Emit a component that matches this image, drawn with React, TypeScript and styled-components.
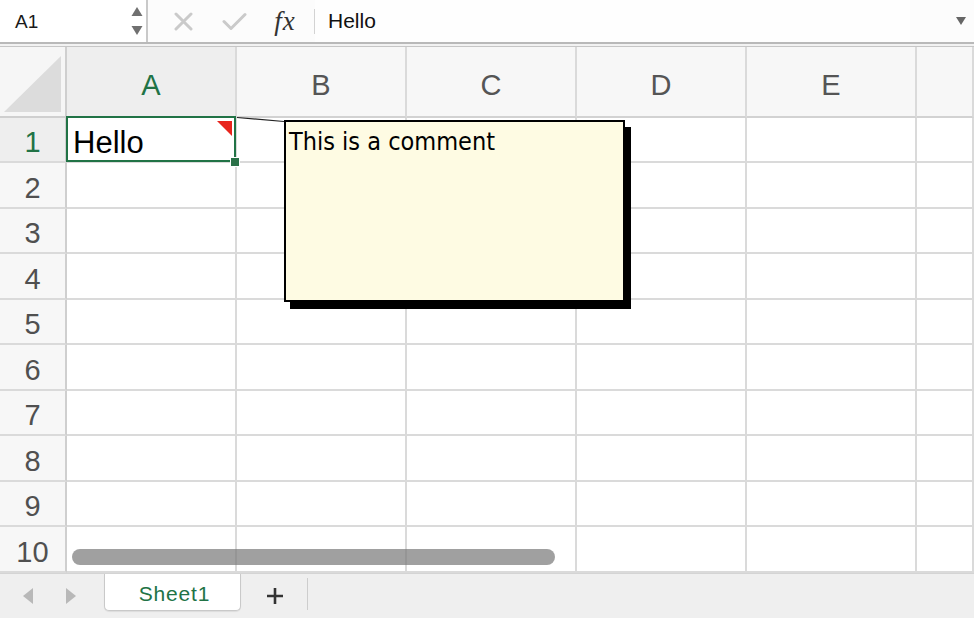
import React from "react";
import styled, { createGlobalStyle } from "styled-components";

const Global = createGlobalStyle`
  html, body { margin: 0; padding: 0; }
  body {
    width: 974px; height: 618px; overflow: hidden; background: #fff;
    font-family: "Liberation Sans", Arial, sans-serif;
  }
`;

const GREEN = "#217346";
const GRID = "#dadada";

const Window = styled.div`
  width: 974px; height: 618px; display: flex; flex-direction: column; overflow: hidden;
`;

const FormulaBar = styled.div`
  height: 42px; display: flex; align-items: center; background: #fcfcfc; flex: none;
`;

const NameBox = styled.div`
  width: 146px; height: 100%; display: flex; align-items: center; justify-content: space-between;
  padding: 0 3px 0 15px; box-sizing: border-box; background: #fff;
`;

const NameText = styled.span`
  font-size: 19px; color: #1a1a1a; padding-top: 1px;
`;

const VDivider = styled.div`
  width: 2px; align-self: stretch; background: #c9c9c9;
`;

const IconSlot = styled.div<{ $w: number }>`
  width: ${(p) => p.$w}px; display: flex; justify-content: center; align-items: center;
`;

const Fx = styled.span`
  font-family: "Liberation Serif", "Times New Roman", serif; font-style: italic;
  font-size: 27px; color: #333; letter-spacing: 1px; margin-left: 6px;
`;

const ThinDivider = styled.div`
  width: 1px; height: 25px; background: #d3d3d3;
`;

const FormulaInput = styled.div`
  flex: 1; height: 100%; display: flex; align-items: center; padding-left: 13px;
  font-size: 21px; color: #111; background: #fefefe; margin-right: 46px;
`;

const ExpandArrow = styled.div`
  width: 0; height: 0;
  border-left: 5px solid transparent; border-right: 5px solid transparent;
  border-top: 8px solid #666; margin-right: 8px;
`;

const BarSeparator = styled.div`
  height: 5px; flex: none; box-sizing: border-box;
  border-top: 2px solid #b9b9b9; border-bottom: 1px solid #c6c6c6; background: #f2f2f2;
`;

const SheetArea = styled.div`
  position: relative; height: 526px; flex: none; overflow: hidden;
`;

const Grid = styled.div`
  display: grid;
  grid-template-columns: 67px repeat(5, 170px) 1fr;
  grid-template-rows: 71px repeat(5, 45px 46px);
  height: 100%;
`;

const Cell = styled.div<{ $selected?: boolean }>`
  position: relative; box-sizing: border-box; background: #fff;
  z-index: ${(p) => (p.$selected ? 2 : "auto")};
  border-right: 2px solid ${GRID}; border-bottom: 2px solid ${GRID};
  display: flex; align-items: center; padding: 7px 0 0 6px;
  font-size: 31px; color: #000;
`;

const Corner = styled.div`
  position: relative; box-sizing: border-box; background: #f6f6f6;
  border-right: 2px solid #cfcfcf; border-bottom: 2px solid #cfcfcf;
  display: flex; align-items: flex-end; justify-content: flex-end; padding: 0 4px 4px 0;
`;

const CornerTri = styled.div`
  width: 0; height: 0;
  border-bottom: 56px solid #dcdcdc; border-left: 57px solid transparent;
`;

const ColHeader = styled.div<{ $active?: boolean }>`
  box-sizing: border-box; background: ${(p) => (p.$active ? "#eeeeee" : "#f7f7f7")};
  border-right: 2px solid ${GRID}; border-bottom: 2px solid #d2d2d2;
  display: flex; align-items: center; justify-content: center; padding-top: 7px;
  font-size: 29px; color: ${(p) => (p.$active ? GREEN : "#555")};
`;

const RowHeader = styled.div<{ $active?: boolean }>`
  box-sizing: border-box; background: ${(p) => (p.$active ? "#eeeeee" : "#f7f7f7")};
  border-right: 2px solid #cfcfcf; border-bottom: 2px solid ${GRID};
  display: flex; align-items: center; justify-content: center; padding-top: 6px;
  font-size: 29px; color: ${(p) => (p.$active ? GREEN : "#505050")};
`;

const Selection = styled.div`
  position: absolute; top: -2px; left: -1px; right: -1px; bottom: -1px;
  border: 2px solid ${GREEN}; pointer-events: none;
`;

const CommentMark = styled.div`
  position: absolute; top: 3px; right: 3px; width: 0; height: 0;
  border-top: 15px solid #e8251d; border-left: 15px solid transparent;
`;

const FillHandle = styled.div`
  position: absolute; right: -5px; bottom: -6px; width: 8px; height: 8px;
  background: #2b7148; border: 1px solid #fff;
`;

const Connector = styled.svg`
  position: absolute; left: 237px; top: 70px; overflow: visible; z-index: 3;
`;

const CommentBox = styled.div`
  position: absolute; left: 284px; top: 73px; width: 341px; height: 182px; z-index: 3;
  box-sizing: border-box; background: #fefbe3; border: 2px solid #000;
  box-shadow: 6px 7px 0 #000; padding: 5px 3px;
  font-family: "DejaVu Sans Condensed", "DejaVu Sans", sans-serif; font-stretch: condensed;
  font-size: 25px; color: #000; line-height: 29px;
`;

const HScrollbar = styled.div`
  position: absolute; left: 72px; top: 502px; width: 483px; height: 16px; z-index: 3;
  border-radius: 8px; background: rgba(120, 120, 120, 0.7);
`;

const SheetTabs = styled.div`
  flex: 1; display: flex; align-items: flex-start; background: #efefef;
  border-top: 1px solid #d4d4d4; box-sizing: border-box;
`;

const NavArrows = styled.div`
  width: 104px; height: 44px; display: flex; align-items: center; gap: 33px;
  padding-left: 23px; box-sizing: border-box;
`;

const NavArrow = styled.div<{ $dir: "left" | "right" }>`
  width: 0; height: 0;
  border-top: 8px solid transparent; border-bottom: 8px solid transparent;
  ${(p) => (p.$dir === "left" ? "border-right: 10px solid #b8b8b8;" : "border-left: 10px solid #b8b8b8;")}
`;

const Tab = styled.div`
  width: 137px; height: 37px; box-sizing: border-box; background: #fff;
  border: 1px solid #c9c9c9; border-top: none; border-radius: 0 0 5px 5px;
  display: flex; align-items: center; justify-content: center; padding: 3px 0 0 4px;
  font-size: 21px; letter-spacing: 0.8px; color: ${GREEN};
  box-shadow: 0 1px 1px rgba(0,0,0,0.08);
`;

const AddSheet = styled.div`
  width: 66px; height: 44px; display: flex; align-items: center; justify-content: center;
  padding-left: 2px; box-sizing: border-box;
`;

const TabDivider = styled.div`
  width: 1px; height: 32px; margin-top: 4px; background: #cdcdcd;
`;

const cols = ["A", "B", "C", "D", "E", ""];

export default function App() {
  const rows = Array.from({ length: 10 }, (_, i) => i + 1);
  return (
    <>
      <Global />
      <Window>
        <FormulaBar>
          <NameBox>
            <NameText>A1</NameText>
            <svg width="12" height="28" viewBox="0 0 12 28">
              <polygon points="6,0 11.5,9 0.5,9" fill="#707070" />
              <polygon points="0.5,19 11.5,19 6,28" fill="#707070" />
            </svg>
          </NameBox>
          <VDivider />
          <IconSlot $w={70}>
            <svg width="19" height="19" viewBox="0 0 19 19">
              <path d="M2 2 L17 17 M17 2 L2 17" stroke="#cacaca" strokeWidth="3" strokeLinecap="round" />
            </svg>
          </IconSlot>
          <IconSlot $w={32}>
            <svg width="25" height="19" viewBox="0 0 25 19">
              <path d="M2 9.5 L9 16.5 L23 2.5" stroke="#cacaca" strokeWidth="3" fill="none" strokeLinecap="round" strokeLinejoin="round" />
            </svg>
          </IconSlot>
          <IconSlot $w={64}>
            <Fx>fx</Fx>
          </IconSlot>
          <ThinDivider />
          <FormulaInput>Hello</FormulaInput>
          <ExpandArrow />
        </FormulaBar>
        <BarSeparator />
        <SheetArea>
          <Grid>
            <Corner>
              <CornerTri />
            </Corner>
            {cols.map((c, i) => (
              <ColHeader key={i} $active={c === "A"}>{c}</ColHeader>
            ))}
            {rows.map((r) => (
              <React.Fragment key={r}>
                <RowHeader $active={r === 1}>{r}</RowHeader>
                {cols.map((c, i) => {
                  const selected = r === 1 && c === "A";
                  return (
                    <Cell key={i} $selected={selected}>
                      {selected && (
                        <>
                          Hello
                          <CommentMark />
                          <Selection />
                          <FillHandle />
                        </>
                      )}
                    </Cell>
                  );
                })}
              </React.Fragment>
            ))}
          </Grid>
          <Connector width="48" height="6">
            <line x1="0" y1="0.5" x2="47" y2="4.5" stroke="#222" strokeWidth="1.2" />
          </Connector>
          <CommentBox>This is a comment</CommentBox>
          <HScrollbar />
        </SheetArea>
        <SheetTabs>
          <NavArrows>
            <NavArrow $dir="left" />
            <NavArrow $dir="right" />
          </NavArrows>
          <Tab>Sheet1</Tab>
          <AddSheet>
            <svg width="18" height="18" viewBox="0 0 18 18">
              <path d="M9 1 V17 M1 9 H17" stroke="#333" strokeWidth="2.6" />
            </svg>
          </AddSheet>
          <TabDivider />
        </SheetTabs>
      </Window>
    </>
  );
}
